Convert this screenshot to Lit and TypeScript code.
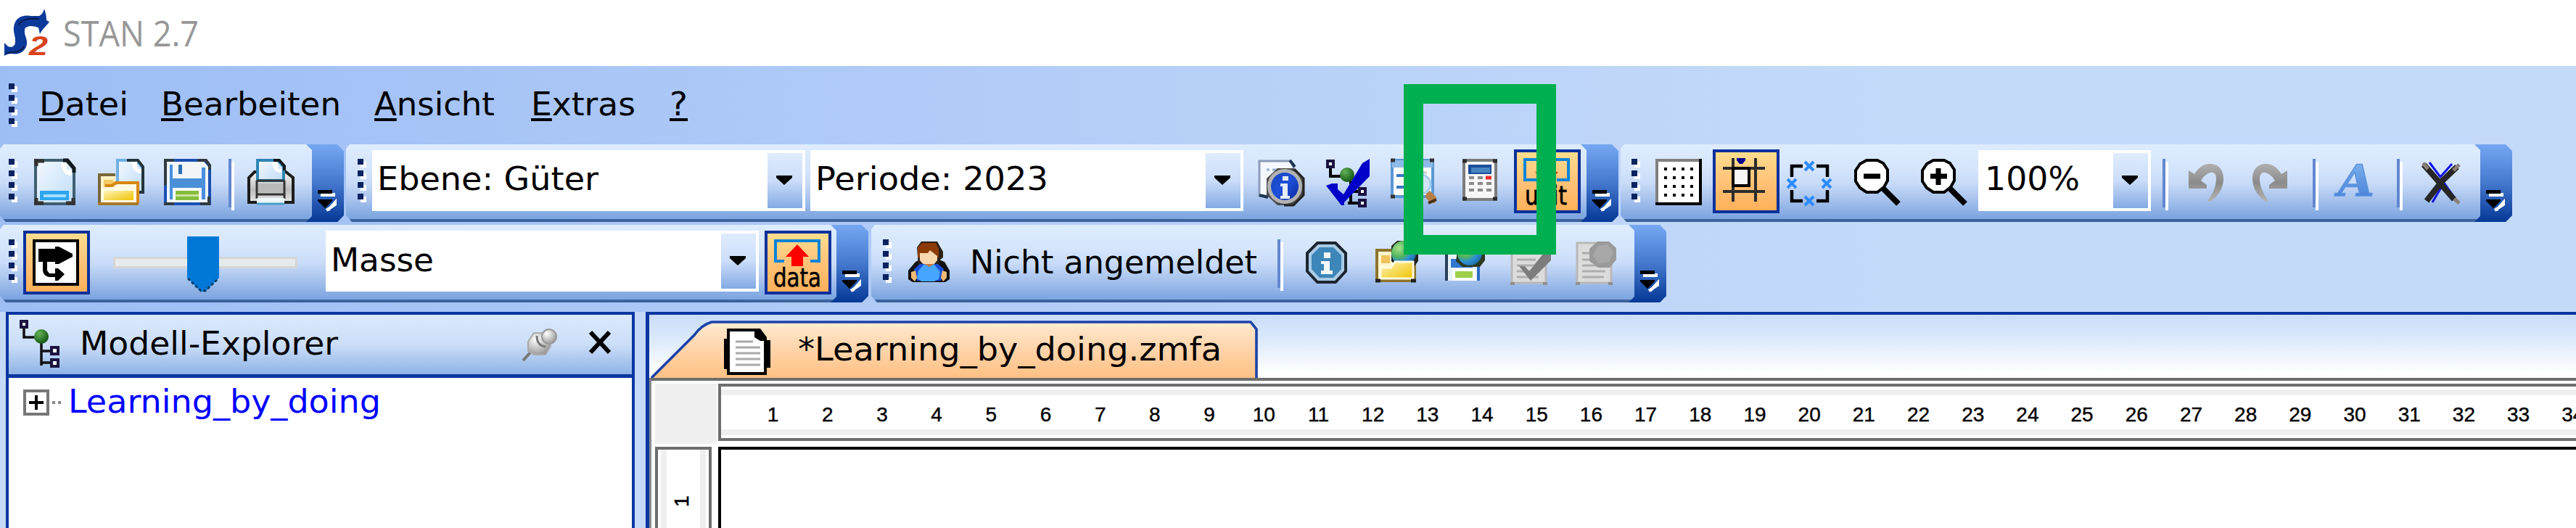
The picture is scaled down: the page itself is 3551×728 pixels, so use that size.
import { LitElement, html, svg, css } from "lit";
import { customElement, property } from "lit/decorators.js";

/* Label whose letters are fitted to a given width. */
@customElement("fit-label")
class FitLabel extends LitElement {
  static styles = css`
    :host { display: block; white-space: pre; }
    span.t { display: inline-block; transform-origin: 0 0; }
    .m { text-decoration: underline; text-decoration-thickness: 4px; text-underline-offset: 4px; text-decoration-skip-ink: none; }
  `;
  @property() text = "";
  @property({ type: Number }) w = 0;
  @property({ type: Boolean }) mnemonic = false;
  render() {
    return this.mnemonic
      ? html`<span class="t"><span class="m">${this.text[0]}</span>${this.text.slice(1)}</span>`
      : html`<span class="t">${this.text}</span>`;
  }
  updated() {
    const s = this.renderRoot.querySelector(".t") as HTMLElement;
    s.style.transform = "none";
    const natural = s.getBoundingClientRect().width;
    if (this.w && natural) s.style.transform = `scaleX(${this.w / natural})`;
    this.style.width = this.w + "px";
  }
}

const icon = (w: number, h: number, body: unknown) =>
  html`<svg class="ic" width=${w} height=${h} viewBox="0 0 ${w} ${h}">${body}</svg>`;

const gradients = svg`<defs>
  <linearGradient id="pg" x1="0" y1="0" x2="1" y2="1"><stop offset="0" stop-color="#f4f9ff"/><stop offset="1" stop-color="#bfdcf8"/></linearGradient>
  <linearGradient id="yl" x1="0" y1="0" x2="1" y2="1"><stop offset="0" stop-color="#fff3b8"/><stop offset="1" stop-color="#efc300"/></linearGradient>
  <linearGradient id="gr" x1="0" y1="0" x2="0" y2="1"><stop offset="0" stop-color="#f6f6f6"/><stop offset=".6" stop-color="#bdbdbd"/><stop offset="1" stop-color="#e8e8e8"/></linearGradient>
  <linearGradient id="bl" x1="0" y1="0" x2="1" y2="1"><stop offset="0" stop-color="#1746c0"/><stop offset=".5" stop-color="#1d50d8"/><stop offset="1" stop-color="#0a2aa0"/></linearGradient>
  <linearGradient id="ar" x1="0" y1="0" x2="0" y2="1"><stop offset="0" stop-color="#b0b0b0"/><stop offset=".5" stop-color="#8b8b8b"/><stop offset="1" stop-color="#b4b4b0"/></linearGradient>
  <radialGradient id="gn" cx=".35" cy=".3" r=".8"><stop offset="0" stop-color="#63b25a"/><stop offset="1" stop-color="#0b4d0b"/></radialGradient>
  <radialGradient id="gl" cx=".3" cy=".3" r=".8"><stop offset="0" stop-color="#a9e08a"/><stop offset=".45" stop-color="#4fb55c"/><stop offset=".7" stop-color="#2f8fd8"/><stop offset="1" stop-color="#1c6a9a"/></radialGradient>
  <radialGradient id="pn" cx=".35" cy=".3" r=".8"><stop offset="0" stop-color="#ffffff"/><stop offset="1" stop-color="#8f8f8f"/></radialGradient>
  <linearGradient id="aa" x1="0" y1="0" x2="0" y2="1"><stop offset="0" stop-color="#86b9ef"/><stop offset="1" stop-color="#3f78d6"/></linearGradient>
</defs>`;

const logo = icon(64, 66, svg`
  <path d="M2 65V47l5 5c5 2 9 0 10-5 1-9-3-13-2-22C17 12 27 8 38 10h12c4-2 6-6 7-10 2 6 3 10 3 16l4 2c-2 4-10 10-13 17l-2-9c-8-3-18-3-19 3-1 8 4 12 3 20-2 11-12 15-21 13-4 0-7 1-10 3z" fill="#0c3a9a"/>
  <path d="M5 61c8-1 19 0 24-9M22 22c4-8 14-9 28-8" fill="none" stroke="#071b4c" stroke-width="2"/>
  <text x="36" y="64" font-family="Liberation Sans" font-weight="bold" font-style="italic" font-size="37" textLength="26" lengthAdjust="spacingAndGlyphs" fill="#d9441c">2</text>`);

const iNew = icon(57, 64, svg`${gradients}
  <path d="M2 2h42l11 12v48H2z" fill="url(#pg)" stroke="#3f5f70" stroke-width="4"/>
  <path d="M37 6h8v9h7v8c-8 0-13-4-15-17z" fill="#fff"/>
  <path d="M40 2h6l9 11v6" fill="none" stroke="#10181c" stroke-width="5"/>
  <path d="M0 3h14M3 0v10M0 61h13M3 54v10M44 61h13M54 54v10" stroke="#333" stroke-width="5"/>
  <path d="M8 44h40v13H8z" fill="#2ea6ee"/><path d="M13 49h31v4H13z" fill="#a5dcff"/>`);

const iOpen = icon(64, 64, svg`${gradients}
  <path d="M27 2h26l9 11v33H27z" fill="url(#pg)" stroke="#6fb0e4" stroke-width="4"/>
  <path d="M46 4h8v10h6v6c-8-1-12-5-14-16z" fill="#fff"/>
  <path d="M40 2h15l7 9v5M62 16v30h-6" fill="none" stroke="#24343c" stroke-width="4"/>
  <path d="M2 62V22h22" fill="none" stroke="#7a6638" stroke-width="4"/>
  <path d="M4 24h20v36H4z" fill="#fdf3c4"/><path d="M8 29h12l5 5-4 6H8z" fill="#f2ca62"/>
  <path d="M4 39h18l6-6h26v28H4z" fill="#fffbe2"/><path d="M8 44h41v13H8z" fill="url(#yl)"/>
  <path d="M10 37h9l6-4h30v28" fill="none" stroke="#d8860f" stroke-width="4"/>
  <path d="M0 62h56" stroke="#a87a2a" stroke-width="4"/>`);

const iSave = icon(65, 64, svg`
  <path d="M2 2h54l7 8v52H2z" fill="#eef5fd" stroke="#1b4fb2" stroke-width="4"/>
  <path d="M0 2h14M2 0v36M46 2h12l5 7v6M0 62h14M50 62h13M62 52v12" stroke="#303a40" stroke-width="4" fill="none"/>
  <path d="M8 8h4v48H8zM52 12h5v44h-5z" fill="#4a90dc"/><path d="M12 27h40v13H12z" fill="#4a90d6"/>
  <path d="M14 5h36v20H14z" fill="#f3f5f9"/><path d="M20 8h5v13h-5z" fill="#2d6fb6"/>
  <path d="M13 41h38v19H13z" fill="#fff"/><path d="M16 44h32v5H16zM16 52h32v5H16z" fill="#84bd3e"/><path d="M16 49h32v3H16z" fill="#c7e39c"/>`);

const iPrint = icon(65, 64, svg`${gradients}
  <path d="M2 60V26l8-8h43l10 8v34z" fill="url(#gr)" stroke="#1c1c1c" stroke-width="4"/>
  <path d="M14 30V2h28l8 9v19z" fill="url(#pg)" stroke="#2f86b4" stroke-width="4"/>
  <path d="M36 2h8l7 8v6" fill="none" stroke="#10181c" stroke-width="4"/><path d="M34 5h8v9h5v5c-8 0-12-5-13-14z" fill="#fff"/>
  <path d="M13 30h38M13 49h38M13 30v25M51 30v25" stroke="#333" stroke-width="3"/>
  <path d="M15 34h34v12H15z" fill="#b9b9b9"/>
  <path d="M13 54h38v8H13z" fill="#eef8ff"/><path d="M13 62h38" stroke="#49a0c8" stroke-width="3"/>`);

const iInfoDoc = icon(64, 66, svg`${gradients}
  <path d="M2 3h42l5 8v40H2z" fill="#f5f9ff" stroke="#8b9bb8" stroke-width="3"/><path d="M44 2l7 9M2 50l12 3" stroke="#1c3550" stroke-width="4"/>
  <path d="M12 15h4M20 15h12" stroke="#8fb0d8" stroke-width="3"/>
  <path d="M27 13h22l14 14v23L49 64H27L12 50V27z" fill="#4a4a4a"/><path d="M50 14l13 13v23L49 64H36" fill="none" stroke="#222" stroke-width="3"/>
  <circle cx="37" cy="38" r="24" fill="#b3b3b3"/><circle cx="37" cy="38" r="19" fill="url(#bl)"/>
  <path d="M34 24h8v6h-8zM31 34h10v17h3v4H31v-4h3V38h-3z" fill="#e6ecfa"/>`);

const iCheck = icon(62, 66, svg`${gradients}
  <path d="M6 11v13h18M34 30v33M34 45h14M30 61h16" fill="none" stroke="#000" stroke-width="4"/>
  <path d="M2 3h8v8H2zM46 41h8v8h-8zM46 57h8v8h-8z" fill="#fff" stroke="#1a1240" stroke-width="4"/>
  <circle cx="29" cy="22" r="10" fill="url(#gn)"/>
  <path d="M0 37l8-3h8v8l8 7L50 6l10-6v24l-3 3L25 60v4h-4z" fill="#0000c8"/>`);

const iWindow = icon(64, 62, svg`
  <path d="M2 2h56v50H2z" fill="#fafcff" stroke="#5a97d4" stroke-width="4"/>
  <path d="M2 2h56v10H2z" fill="#8fbbe8"/><path d="M0 2h6M54 2h6M0 52h6" stroke="#333" stroke-width="5"/>
  <path d="M8 23h18M8 39h18" stroke="#3a78c8" stroke-width="4"/><path d="M32 19h18M32 39h18" stroke="#c7c7c7" stroke-width="3"/>
  <circle cx="42" cy="35" r="13" fill="#cfe5fb" stroke="#a9cdf0" stroke-width="3"/>
  <path d="M49 48l5-4 9 9-2 8h-6l-7-8z" fill="#b87f45"/><path d="M52 61l11-5" stroke="#4a3018" stroke-width="4"/>`);

const iCalc = icon(48, 58, svg`
  <path d="M2 2h44v54H2z" fill="#f6f6f6" stroke="#7c7c7c" stroke-width="4"/>
  <path d="M0 3h6M42 3h6M0 55h6M42 55h6" stroke="#2d2d2d" stroke-width="5"/>
  <path d="M8 8h32v13H8z" fill="#1b4d9b"/><path d="M12 12h26v7H12z" fill="#4785c0"/>
  <path d="M9 26h7M21 26h7M9 34h7M21 34h7M33 34h7M9 43h7M21 43h7M33 43h7" stroke="#8b8b8b" stroke-width="4"/>
  <path d="M32 26h8" stroke="#ee2a2a" stroke-width="5"/>`);

const iUnit = icon(64, 66, svg`
  <path d="M18 30H2V2h60v28H46" fill="none" stroke="#0a84d8" stroke-width="4"/>
  <path d="M16 19h10V8h12v11h10L32 34z" fill="#f00"/>
  <text x="2" y="64" font-family="DejaVu Sans" font-size="36" textLength="58" lengthAdjust="spacingAndGlyphs" stroke="#000" stroke-width=".8">unit</text>`);

const iData = icon(64, 66, svg`
  <path d="M14 30H2V2h60v28H50" fill="none" stroke="#0a84d8" stroke-width="4"/>
  <path d="M32 7l16 17h-8v13H24V24h-8z" fill="#f00"/>
  <text x="-1" y="65" font-family="DejaVu Sans" font-size="36" textLength="66" lengthAdjust="spacingAndGlyphs" stroke="#000" stroke-width=".6">data</text>`);

const iGrid = icon(64, 64, svg`
  <path d="M0 0h64v64H0z" fill="#000"/><path d="M0 0h60v4H4v56H0z" fill="#808080"/><path d="M4 4h56v56H4z" fill="#fff"/>
  ${[14, 26, 38, 50].map((y) => [14, 26, 38, 50].map((x) => svg`<rect x=${x - 2} y=${y - 2} width="4" height="4"/>`))}`);

const iSnap = icon(64, 64, svg`
  <path d="M15 0v60M46 0v60M1 14h58M1 46h58" stroke="#2c2c2c" stroke-width="4" fill="none"/>
  <path d="M15 14h22v24H15z" fill="#f6f6f6" stroke="#000" stroke-width="4"/><path d="M20 0h12v3l-4 5h-4l-4-5z" fill="#00008c"/>`);

const cross = (x: number, y: number) => svg`<path d="M${x - 6} ${y - 6}l12 12M${x + 6} ${y - 6}l-12 12" stroke="#2e8bff" stroke-width="4"/>`;
const iFit = icon(62, 66, svg`
  <path d="M7 25V10h15M41 10h15v15M56 43v15H41M22 58H7V43" fill="none" stroke="#000" stroke-width="4.5"/>
  ${cross(31, 10)}${cross(7, 34)}${cross(55, 34)}${cross(31, 58)}`);

const zoom = (plus: boolean) => icon(66, 66, svg`
  <path d="M17 2h15l8 4 6 9v15l-5 9-9 7H17l-9-6-6-9V16l6-9z" fill="#fff" stroke="#000" stroke-width="4"/>
  <path d="M13 24h23" stroke="#000" stroke-width="7"/>${plus ? svg`<path d="M24 13v23" stroke="#000" stroke-width="7"/>` : ""}
  <path d="M40 41l21 21" stroke="#000" stroke-width="8"/>`);

const undo = svg`<path d="M0 9l8 5C15 3 24-1 32 0c10 1 16 9 16 20 0 14-8 26-19 32l-3-1c8-11 12-20 12-31 0-7-4-9-8-8-6 2-10 6-13 11l8 6v5H0z" fill="url(#ar)"/>`;
const iUndo = icon(48, 60, svg`${gradients}<g transform="translate(0 7)">${undo}</g>`);
const iRedo = icon(48, 60, svg`${gradients}<g transform="translate(48 7) scale(-1 1)">${undo}</g>`);

const iFont = icon(54, 54, svg`${gradients}
  <text x="3" y="51" font-family="DejaVu Serif" font-weight="bold" font-style="italic" font-size="60" textLength="50" lengthAdjust="spacingAndGlyphs" fill="url(#aa)" stroke="#5b93e0" stroke-width="1.5">A</text>`);

const iDelete = icon(54, 62, svg`
  <path d="M12 5l15 20L43 7M51 60L32 33 16 60" fill="none" stroke="#1010e8" stroke-width="3"/>
  <path d="M4 8l9 10 33 38M50 11L30 30 8 58" fill="none" stroke="#262626" stroke-width="8"/><path d="M3 6l7 8M53 8l-8 8M46 55l7 6" stroke="#8a8076" stroke-width="5"/>`);

const iFlow = icon(64, 64, svg`
  <path d="M2 2h60v60H2z" fill="#fff" stroke="#000" stroke-width="4"/>
  <path d="M8 13h23v-3h5l19 10v4L36 34h-5v-3H20v12l3 4h8v-7h4l9 8-9 9h-4v-5H23c-6-1-9-5-9-10V31H8z" fill="#000"/>`);

const iUser = icon(57, 57, svg`
  <path d="M6 56l-6-4V40l10-12 8-4h22l10 4 7 12v12l-6 4z" fill="#111"/>
  <path d="M12 8l6-8h22l5 9 3 5v8l-5 4v7H14z" fill="#2a2018"/>
  <path d="M13 8l6-6h19l4 8v12H13z" fill="#8c3a06"/><path d="M16 16h11l3-4 10 8v6l-6 7H22l-6-7z" fill="#f8d6ae"/>
  <path d="M8 38l8-7h25l8 7-4 16H12z" fill="#1b50d8"/><path d="M14 40l7-8h15l8 10-2 10-6 3H18l-6-4z" fill="#45a5ff"/>
  <path d="M4 42l6-2 2 10-3 5-5-5zM53 42l-6-2-2 10 3 5 5-5z" fill="#f0ba74"/><path d="M22 31h14l-7 4z" fill="#c4763a"/>`);

const iInfo = icon(57, 58, svg`
  <path d="M16 2h25l14 14v25L41 56H16L2 41V16z" fill="#a9cbe6" stroke="#1c2630" stroke-width="4"/>
  <path d="M19 8h19l11 11v19L38 50H19L8 38V19z" fill="#3d86b8"/>
  <path d="M25 15h9v8h-9zM21 27h12v13h4v5H21v-5h4v-9h-4z" fill="#f2f8fc"/>`);

const iFolderGlobe = icon(60, 58, svg`${gradients}
  <path d="M2 54V12h20l6 8h26v34z" fill="#fff6cc" stroke="#8d742e" stroke-width="4"/>
  <path d="M8 19h12v11H8z" fill="#efc25c"/><path d="M22 6l8-7h16l10 6 3 10v12l-6 8H30l-8-8z" fill="#222"/>
  <circle cx="39" cy="16" r="17" fill="url(#gl)"/>
  <path d="M7 36h14l6-8h25v23H7z" fill="url(#yl)" stroke="#fffbe0" stroke-width="3"/><path d="M0 54h7M49 54h7" stroke="#222" stroke-width="5"/>`);

const iSaveGlobe = icon(60, 58, svg`${gradients}
  <path d="M4 2h44v52H4z" fill="#e8f2fd"/><path d="M4 0v54" stroke="#28405c" stroke-width="4"/><path d="M48 22v32" stroke="#2a6cc4" stroke-width="4"/>
  <path d="M10 24h30v12H10z" fill="#2f78d2"/><path d="M12 38h32v16H12z" fill="#fff"/><path d="M16 41h24v9H16z" fill="#9bd04a"/>
  <path d="M20 6h32l5 6v14l-7 9H26l-9-8z" fill="#2d3a20"/><circle cx="36" cy="16" r="17" fill="url(#gl)"/>`);

const grayDoc = svg`<path d="M2 2h36l11 10v45H2z" fill="#dcdcdc" stroke="#b9b9b9" stroke-width="3"/><path d="M0 58h6M45 58h6" stroke="#8f8f8f" stroke-width="4"/>
  <path d="M9 16h22M9 25h26M9 33h32M9 41h32M9 49h30" stroke="#aeaeae" stroke-width="3"/>`;
const iDocCheck = icon(60, 62, svg`${grayDoc}<path d="M12 34h8l6 7L46 16h10v10L28 54z" fill="#7d7d7d"/>`);
const iDocGlobe = icon(60, 62, svg`${grayDoc}<path d="M30 0h16l10 9v16l-9 11H31L19 27V10z" fill="#9a9a9a"/><path d="M30 6l14-2 8 10-6 14-14 2-8-10z" fill="#a8a8a8"/>`);

const iTree = icon(57, 66, svg`${gradients}
  <path d="M6 11v13h18M30 30v33M30 43h13M30 59h13" fill="none" stroke="#111" stroke-width="3.5"/>
  <path d="M2 2h8v8H2zM44 38h9v9h-9zM44 55h9v9h-9z" fill="#fff" stroke="#1a1240" stroke-width="4"/><circle cx="30" cy="23" r="10" fill="url(#gn)"/>`);

const iPin = icon(48, 46, svg`${gradients}
  <path d="M1 44l12-13" stroke="#777" stroke-width="4"/><path d="M8 18l8-12h16l7 18-7 12H16l-8-5z" fill="url(#pn)" stroke="#aaa" stroke-width="2"/>
  <circle cx="37" cy="11" r="10" fill="url(#pn)" stroke="#999" stroke-width="2"/><path d="M20 10c0 9 4 14 12 15" stroke="#777" stroke-width="3" fill="none"/>`);
const iClose = icon(34, 30, svg`<path d="M4 1l26 28M30 1L4 29" stroke="#000" stroke-width="6"/>`);

const iDoc = icon(64, 64, svg`
  <path d="M0 14h5v42H0zM58 16h6v38h-6z" fill="#000"/><path d="M4 0h46l9 12v52H4z" fill="#000"/>
  <path d="M8 4h34v8l8 5h5v43H8z" fill="#fff"/><path d="M16 18h24M16 26h34M16 34h34M16 42h34M16 50h34" stroke="#aaa" stroke-width="3"/>`);

const grip = html`<svg class="grip" width="12" height="60" viewBox="0 0 12 60">${[0, 16, 32, 48].map(
  (y) => svg`<rect x="4" y=${y + 4} width="8" height="8" fill="#fff"/><rect y=${y} width="8" height="8" fill="#0a2260"/>`)}</svg>`;

const cap = html`<svg class="cap" width="52" height="107" viewBox="0 0 52 107">
  <defs><linearGradient id="c" x1="0" y1="0" x2="0" y2="1"><stop offset="0" stop-color="#76a7f2"/><stop offset=".5" stop-color="#4478cd"/><stop offset="1" stop-color="#053896"/></linearGradient></defs>
  <path d="M0 0h52v107H0l8-8V8z" fill="url(#c)"/>
  <path d="M20 67h20v5H20z" fill="#fff"/><path d="M16 63h20v5H16z"/>
  <path d="M30 91l10-11v3L28 91" fill="none" stroke="#fff" stroke-width="4"/>
  <path d="M16 76h20v2L26 88 16 78z"/></svg>`;

const sep = html`<div class="sep"></div>`;
const tri = html`<svg width="22" height="13" viewBox="0 0 22 13"><path d="M0 0h22v3L11 13 0 3z"/></svg>`;
const combo = (cls: string, text: string, w: number) =>
  html`<div class="combo ${cls}"><fit-label text=${text} w=${w}></fit-label><div class="drop">${tri}</div></div>`;

@customElement("app-root")
class AppRoot extends LitElement {
  static styles = css`
    :host {
      display: flex; flex-direction: column; position: relative; width: 3551px; height: 728px; overflow: hidden;
      font: 44px/50px "DejaVu Sans", sans-serif; color: #000;
      background: linear-gradient(90deg, #9dbdf5 0, #c4daf9 2600px);
    }
    svg { display: block; flex: none; overflow: visible; }
    .title { height: 91px; background: #fff; display: flex; align-items: flex-start; }
    .title .ic { margin: 12px 0 0 4px; }
    .title fit-label { margin: 18px 0 0 19px; font: 50px/54px "Open Sans", "Noto Sans", sans-serif; color: #979797; }
    .menu { height: 108px; display: flex; align-items: flex-start; padding-left: 12px; }
    .menu .grip { margin-top: 24px; }
    .menu nav { display: grid; grid-template-columns: 168px 294px 216px 191px 60px; margin: 28px 0 0 30px; }
    .dock { display: flex; height: 107px; flex: none; }
    .dock.first { margin-bottom: 4px; gap: 3px; }
    .dock.second { margin-bottom: 13px; gap: 4px; }
    .bar {
      display: grid; align-items: start; justify-items: start; box-sizing: border-box; height: 107px;
      background: linear-gradient(#3f659f, #3b619c) 0 100% / 100% 4px no-repeat,
        linear-gradient(180deg, #deecfe 0, #d5e5fc 30%, #c8dbf8 50%, #a5c1ec 72%, #7fa7e1 93%, #7ba3de 100%);
      clip-path: polygon(5px 0, calc(100% - 9px) 0, 100% 9px, 100% calc(100% - 9px), calc(100% - 9px) 100%, 8px 100%, 0 calc(100% - 9px), 0 6px);
    }
    .bar > .ic, .bar > .grip { margin-top: 20px; }
    .file { padding-left: 12px; grid-template-columns: 35px 88px 91px 89px 26px 81px 52px; }
    .edit { padding-left: 16px; grid-template-columns: 20px 604px 617px 94px 89px 99px 71px 92px 52px; }
    .view { padding-left: 15px; grid-template-columns: 33px 79px 102px 93px 92px 79px 254px 36px 88px 83px 32px 84px 33px 74px 52px; }
    .flow { padding-left: 12px; grid-template-columns: 20px 124px 293px 605px 91px 52px; }
    .user { padding-left: 16px; grid-template-columns: 35px 85px 424px 39px 96px 94px 92px 90px 73px 52px; }
    .user > .ic { margin-top: 23px; }
    .user > fit-label { margin-top: 27px; }
    .toggle {
      box-sizing: border-box; width: 92px; height: 88px; margin-top: 7px; border: 4px solid #0a309c; padding: 8px 0 0 9px;
      background: linear-gradient(#ffdd8e, #ffc57a 45%, #ffb05a);
    }
    .second .toggle { margin-top: 8px; }
    .sep { width: 4px; height: 67px; margin-top: 20px; background: #6286d0; box-shadow: 4px 4px 0 #fff; }
    .combo { display: flex; box-sizing: border-box; width: 597px; height: 84px; margin-top: 8px; padding: 4px 4px 4px 7px; background: #fff; justify-content: space-between; }
    .combo fit-label { margin-top: 11px; }
    .second .combo fit-label { margin-top: 12px; }
    .combo.zoomf { width: 238px; padding-left: 9px; }
    .drop { width: 48px; display: flex; align-items: flex-start; justify-content: center; box-sizing: border-box; padding: 31px 3px 0 0; background: linear-gradient(#dfecfe, #cbddf9 50%, #83aae3); }
    .slider { width: 254px; height: 84px; margin-top: 8px; display: grid; align-items: start; }
    .track { grid-area: 1 / 1; box-sizing: border-box; height: 16px; margin-top: 36px; border: 3px solid #d6d6d6; background: #e7eaea; }
    .slider svg { grid-area: 1 / 1; margin: 8px 0 0 102px; }
    .work { flex: 1; display: flex; min-height: 0; padding-left: 8px; gap: 15px; background: #c5dafa; }
    .explorer { width: 867px; box-sizing: border-box; border: 4px solid #0a36a0; border-bottom: 0; background: #fff; }
    .head { height: 82px; display: flex; align-items: flex-start; border-bottom: 5px solid #0a36a0; background: linear-gradient(#dbe9fd, #cbdef8 50%, #8fb3e6); }
    .head .tree { margin: 7px 0 0 15px; }
    .head fit-label { margin: 15px 0 0 26px; }
    .head .pin { margin: 19px 0 0 254px; width: 90px; }
    .head .close { margin-top: 23px; }
    .node { display: flex; align-items: flex-start; padding: 16px 0 0 20px; color: #00f; }
    .node fit-label { margin-left: 8px; margin-top: -8px; }
    .doc { flex: 1; min-width: 0; display: flex; flex-direction: column; border: solid #0a36a0; border-width: 4px 0 0 5px; background: #fff; }
    .tabs { height: 87px; flex: none; background: linear-gradient(#cadcf9, #d9e8fb 35%, #fff 92%); }
    .tab { display: grid; width: 840px; }
    .tab > svg { grid-area: 1 / 1; }
    .tab > div { grid-area: 1 / 1; display: flex; padding: 19px 0 0 103px; }
    .tab fit-label { margin: 4px 0 0 38px; }
    .sheet { flex: 1; border-top: 4px solid #6e6e6e; border-left: 3px solid #8a8a8a; display: grid; grid-template: 87px 1fr / 85px 1fr; padding: 4px 0 0 5px; column-gap: 2px; }
    .corner { background: #efefef; height: 83px; }
    .ruler { box-sizing: border-box; height: 79px; border: 4px solid #6e6e6e; border-right: 0; padding: 4px 0; overflow: hidden; }
    .marks { display: flex; box-sizing: border-box; height: 63px; border: solid #efefef; border-width: 8px 0; padding: 12px 0 0 34px; font: 28px/30px "Liberation Sans", Arial, sans-serif; -webkit-text-stroke: .4px #000; }
    .marks span { flex: none; width: 75.2px; text-align: center; }
    .vruler { box-sizing: border-box; width: 78px; border: 4px solid #6e6e6e; border-bottom: 0; padding: 0 4px; }
    .vmarks { box-sizing: border-box; height: 100%; border: solid #efefef; border-width: 0 8px; display: flex; justify-content: flex-start; padding: 63px 0 0 9px; font: 28px/24px "Liberation Sans", Arial, sans-serif; -webkit-text-stroke: .6px #000; }
    .vmarks span { writing-mode: vertical-rl; transform: rotate(180deg); height: 16px; }
    .canvas { border: solid #000; border-width: 4px 0 0 4px; background: #fff; }
    .marker { position: absolute; box-sizing: border-box; left: 1935px; top: 116px; width: 210px; height: 235px; border: 27px solid #00b050; }
  `;

  render() {
    const numbers = Array.from({ length: 34 }, (_, i) => i + 1);
    return html`
      <div class="title">${logo}<fit-label text="STAN 2.7" w="187"></fit-label></div>
      <div class="menu">${grip}
        <nav>
          <fit-label mnemonic text="Datei" w="123"></fit-label>
          <fit-label mnemonic text="Bearbeiten" w="248"></fit-label>
          <fit-label mnemonic text="Ansicht" w="166"></fit-label>
          <fit-label mnemonic text="Extras" w="144"></fit-label>
          <fit-label mnemonic text="?" w="25"></fit-label>
        </nav>
      </div>
      <div class="dock first">
        <div class="bar file">${grip}${iNew}${iOpen}${iSave}${sep}${iPrint}${cap}</div>
        <div class="bar edit">${grip}${combo("", "Ebene: Güter", 305)}${combo("", "Periode: 2023", 321)}${iInfoDoc}${iCheck}${iWindow}${iCalc}
          <div class="toggle">${iUnit}</div>${cap}</div>
        <div class="bar view">${grip}${iGrid}<div class="toggle">${iSnap}</div>${iFit}${zoom(false)}${zoom(true)}${combo("zoomf", "100%", 131)}
          ${sep}${iUndo}${iRedo}${sep}${iFont}${sep}${iDelete}${cap}</div>
      </div>
      <div class="dock second">
        <div class="bar flow">${grip}<div class="toggle">${iFlow}</div>
          <div class="slider"><div class="track"></div><svg width="44" height="76" viewBox="0 0 44 76"><path d="M0 0h44v57L25 76h-6L0 57z" fill="#0078d7"/><path d="M1 58l18 17h6l18-17" fill="none" stroke="#0a3f70" stroke-width="3" stroke-dasharray="4 3"/></svg></div>
          ${combo("", "Masse", 142)}<div class="toggle">${iData}</div>${cap}</div>
        <div class="bar user">${grip}${iUser}<fit-label text="Nicht angemeldet" w="396"></fit-label>${sep}${iInfo}${iFolderGlobe}${iSaveGlobe}${iDocCheck}${iDocGlobe}${cap}</div>
      </div>
      <div class="work">
        <div class="explorer">
          <div class="head"><div class="tree">${iTree}</div><fit-label text="Modell-Explorer" w="356"></fit-label><div class="pin">${iPin}</div><div class="close">${iClose}</div></div>
          <div class="node">
            <svg width="54" height="36" viewBox="0 0 54 36"><path d="M2 2h32v32H2z" fill="#fff" stroke="#777" stroke-width="4"/><path d="M8 18h20M18 8v20" stroke="#000" stroke-width="4"/><path d="M40 18h4M48 18h4" stroke="#888" stroke-width="4"/></svg>
            <fit-label text="Learning_by_doing" w="431"></fit-label>
          </div>
        </div>
        <div class="doc">
          <div class="tabs"><div class="tab">
            <svg width="840" height="87" viewBox="0 0 840 87">
              <defs><linearGradient id="t" x1="0" y1="0" x2="0" y2="1"><stop offset="0" stop-color="#ffeed0"/><stop offset=".15" stop-color="#ffe2c4"/><stop offset="1" stop-color="#ffc083"/></linearGradient></defs>
              <path d="M3 87L62 28Q72 14 86 10H829l8 10V87" fill="url(#t)" stroke="#1a42a8" stroke-width="3.6"/></svg>
            <div>${iDoc}<fit-label text="*Learning_by_doing.zmfa" w="584"></fit-label></div>
          </div></div>
          <div class="sheet">
            <div class="corner"></div>
            <div class="ruler"><div class="marks">${numbers.map((n) => html`<span>${n}</span>`)}</div></div>
            <div class="vruler"><div class="vmarks"><span>1</span></div></div>
            <div class="canvas"></div>
          </div>
        </div>
      </div>
      <div class="marker"></div>`;
  }
}
